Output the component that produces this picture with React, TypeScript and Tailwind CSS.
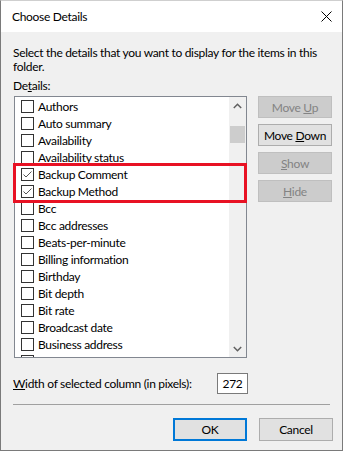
import React from "react";

const items: { label: string; checked?: boolean }[] = [
  { label: "Authors" },
  { label: "Auto summary" },
  { label: "Availability" },
  { label: "Availability status" },
  { label: "Backup Comment", checked: true },
  { label: "Backup Method", checked: true },
  { label: "Bcc" },
  { label: "Bcc addresses" },
  { label: "Beats-per-minute" },
  { label: "Billing information" },
  { label: "Birthday" },
  { label: "Bit depth" },
  { label: "Bit rate" },
  { label: "Broadcast date" },
  { label: "Business address" },
  { label: "" },
];

function Check({ checked }: { checked?: boolean }) {
  return (
    <div className="w-[13px] h-[13px] shrink-0 border border-[#333333] bg-white flex items-center justify-center">
      {checked && (
        <svg width="11" height="11" viewBox="0 0 11 11">
          <path d="M1.5 5.5 L4 8 L9.5 2.5" fill="none" stroke="#555555" strokeWidth="1" />
        </svg>
      )}
    </div>
  );
}

function Btn({ children, enabled }: { children: React.ReactNode; enabled?: boolean }) {
  return (
    <div
      className={
        enabled
          ? "w-[74px] h-[22px] border border-[#adadad] bg-[#e1e1e1] text-black flex items-center justify-center"
          : "w-[74px] h-[22px] border border-[#bfbfbf] bg-[#cccccc] text-[#838383] flex items-center justify-center"
      }
    >
      <span>{children}</span>
    </div>
  );
}

export default function App() {
  return (
    <div className="w-[344px] h-[453px] bg-white font-['Lato',sans-serif] text-[12px] tracking-[-0.3px] text-black leading-[15px]">
      <div className="w-[343px] h-[451px] border border-[#7a7a7a] border-t-[#cfcfcf] bg-[#f0f0f0] flex flex-col">
        <div className="h-[31px] shrink-0 bg-white flex items-center justify-between pl-[11px] pr-[10px]">
          <span>Choose Details</span>
          <svg width="11" height="11" viewBox="0 0 11 11">
            <path d="M0.5 0.5 L10.5 10.5 M10.5 0.5 L0.5 10.5" stroke="#000" strokeWidth="1" />
          </svg>
        </div>
        <div className="flex flex-col pl-[12px]">
          <p className="mt-[14px] leading-[14px] whitespace-nowrap">
            Select the details that you want to display for the items in this
            <br />
            folder.
          </p>
          <div className="mt-[4px]">
            De<span className="underline">t</span>ails:
          </div>
          <div className="mt-[3px] flex">
            <div className="relative ml-[1px] w-[233px] h-[262px] border border-[#828790] bg-white flex">
              <div className="flex-1 overflow-hidden pt-[1px] flex flex-col">
                {items.map((it, i) => (
                  <div key={i} className="h-[17px] shrink-0 flex items-center pl-[6px] gap-[4px] whitespace-nowrap">
                    <Check checked={it.checked} />
                    {it.label && <span>{it.label}</span>}
                  </div>
                ))}
              </div>
              <div className="w-[17px] shrink-0 bg-[#f0f0f0] flex flex-col">
                <div className="h-[17px] flex items-center justify-center">
                  <svg width="9" height="6" viewBox="0 0 9 6">
                    <path d="M0.8 5 L4.5 1.3 L8.2 5" fill="none" stroke="#606060" strokeWidth="1.5" />
                  </svg>
                </div>
                <div className="mt-[12px] mx-[1px] h-[17px] bg-[#cdcdcd]" />
                <div className="flex-1" />
                <div className="h-[17px] flex items-center justify-center">
                  <svg width="9" height="6" viewBox="0 0 9 6">
                    <path d="M0.8 1 L4.5 4.7 L8.2 1" fill="none" stroke="#606060" strokeWidth="1.5" />
                  </svg>
                </div>
              </div>
              <div className="absolute left-[-2px] top-[66px] w-[234px] h-[40px] border-[3px] border-[#e81123]" />
            </div>
            <div className="ml-[11px] flex flex-col gap-[6px]">
              <Btn>
                Move <span className="underline">U</span>p
              </Btn>
              <Btn enabled>
                Move <span className="underline">D</span>own
              </Btn>
              <Btn>
                <span className="underline">S</span>how
              </Btn>
              <Btn>
                <span className="underline">H</span>ide
              </Btn>
            </div>
          </div>
          <div className="mt-[15px] w-[235px] flex items-center justify-between">
            <span>
              <span className="underline">W</span>idth of selected column (in pixels):
            </span>
            <div className="w-[31px] h-[21px] border border-[#7a7a7a] bg-white flex items-center justify-center">
              272
            </div>
          </div>
          <div className="mt-[10px] w-[317px] h-px bg-[#a0a0a0]" />
          <div className="mt-[13px] w-[320px] flex justify-end gap-[12px]">
            <div className="w-[74px] h-[23px] border-2 border-[#0078d7] bg-[#e1e1e1] flex items-center justify-center">
              OK
            </div>
            <div className="w-[74px] h-[23px] border border-[#adadad] bg-[#e1e1e1] flex items-center justify-center">
              Cancel
            </div>
          </div>
        </div>
      </div>
    </div>
  );
}
